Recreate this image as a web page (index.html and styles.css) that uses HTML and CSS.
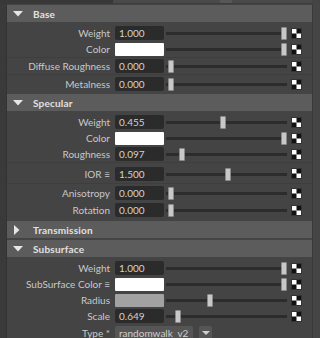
FILE: index.html
```html
<!DOCTYPE html>
<html lang="en">
<head>
    <meta charset="UTF-8">
    <title>Attribute Editor</title>
    <link rel="stylesheet" href="styles.css">
</head>
<body>
    <div class="topbar">
        <div class="topbar-dark"></div>
        <div class="topbar-field"><span class="topbar-knob"></span></div>
    </div>
    <div class="frame">
        <div class="gutter"></div>
        <div class="content">

            <div class="head">
                <svg class="arrow" width="10" height="6" viewBox="0 0 10 6"><polygon points="0,0 10,0 5,5.5" fill="#e6e6e6"/></svg>
                <span>Base</span>
            </div>
            <div class="row mt4">
                <span class="label">Weight</span>
                <span class="field">1.000</span>
                <div class="slider"><span class="handle" style="left:115px"></span></div>
                <svg class="map" viewBox="0 0 11 11"><rect x="0.5" y="0.5" width="10" height="10" fill="#fff" stroke="#333"/><rect x="5.5" y="1" width="4.5" height="4.5" fill="#111"/><rect x="1" y="5.5" width="4.5" height="4.5" fill="#111"/></svg>
            </div>
            <div class="row">
                <span class="label">Color</span>
                <span class="swatch white"></span>
                <div class="slider"><span class="handle" style="left:115px"></span></div>
                <svg class="map" viewBox="0 0 11 11"><rect x="0.5" y="0.5" width="10" height="10" fill="#fff" stroke="#333"/><rect x="5.5" y="1" width="4.5" height="4.5" fill="#111"/><rect x="1" y="5.5" width="4.5" height="4.5" fill="#111"/></svg>
            </div>
            <div class="sep"></div>
            <div class="row mt1">
                <span class="label">Diffuse Roughness</span>
                <span class="field">0.000</span>
                <div class="slider"><span class="handle" style="left:2px"></span></div>
                <svg class="map" viewBox="0 0 11 11"><rect x="0.5" y="0.5" width="10" height="10" fill="#fff" stroke="#333"/><rect x="5.5" y="1" width="4.5" height="4.5" fill="#111"/><rect x="1" y="5.5" width="4.5" height="4.5" fill="#111"/></svg>
            </div>
            <div class="sep"></div>
            <div class="row">
                <span class="label">Metalness</span>
                <span class="field">0.000</span>
                <div class="slider"><span class="handle" style="left:2px"></span></div>
                <svg class="map" viewBox="0 0 11 11"><rect x="0.5" y="0.5" width="10" height="10" fill="#fff" stroke="#333"/><rect x="5.5" y="1" width="4.5" height="4.5" fill="#111"/><rect x="1" y="5.5" width="4.5" height="4.5" fill="#111"/></svg>
            </div>

            <div class="head mt3">
                <svg class="arrow" width="10" height="6" viewBox="0 0 10 6"><polygon points="0,0 10,0 5,5.5" fill="#e6e6e6"/></svg>
                <span>Specular</span>
            </div>
            <div class="row mt4">
                <span class="label">Weight</span>
                <span class="field">0.455</span>
                <div class="slider"><span class="handle" style="left:54px"></span></div>
                <svg class="map" viewBox="0 0 11 11"><rect x="0.5" y="0.5" width="10" height="10" fill="#fff" stroke="#333"/><rect x="5.5" y="1" width="4.5" height="4.5" fill="#111"/><rect x="1" y="5.5" width="4.5" height="4.5" fill="#111"/></svg>
            </div>
            <div class="row">
                <span class="label">Color</span>
                <span class="swatch white"></span>
                <div class="slider"><span class="handle" style="left:115px"></span></div>
                <svg class="map" viewBox="0 0 11 11"><rect x="0.5" y="0.5" width="10" height="10" fill="#fff" stroke="#333"/><rect x="5.5" y="1" width="4.5" height="4.5" fill="#111"/><rect x="1" y="5.5" width="4.5" height="4.5" fill="#111"/></svg>
            </div>
            <div class="row">
                <span class="label">Roughness</span>
                <span class="field">0.097</span>
                <div class="slider"><span class="handle" style="left:13px"></span></div>
                <svg class="map" viewBox="0 0 11 11"><rect x="0.5" y="0.5" width="10" height="10" fill="#fff" stroke="#333"/><rect x="5.5" y="1" width="4.5" height="4.5" fill="#111"/><rect x="1" y="5.5" width="4.5" height="4.5" fill="#111"/></svg>
            </div>
            <div class="sep"></div>
            <div class="row tall">
                <span class="label">IOR ≡</span>
                <span class="field">1.500</span>
                <div class="slider"><span class="handle" style="left:59px"></span></div>
                <svg class="map" viewBox="0 0 11 11"><rect x="0.5" y="0.5" width="10" height="10" fill="#fff" stroke="#333"/><rect x="5.5" y="1" width="4.5" height="4.5" fill="#111"/><rect x="1" y="5.5" width="4.5" height="4.5" fill="#111"/></svg>
            </div>
            <div class="sep mt2"></div>
            <div class="row">
                <span class="label">Anisotropy</span>
                <span class="field">0.000</span>
                <div class="slider"><span class="handle" style="left:2px"></span></div>
                <svg class="map" viewBox="0 0 11 11"><rect x="0.5" y="0.5" width="10" height="10" fill="#fff" stroke="#333"/><rect x="5.5" y="1" width="4.5" height="4.5" fill="#111"/><rect x="1" y="5.5" width="4.5" height="4.5" fill="#111"/></svg>
            </div>
            <div class="row mt3">
                <span class="label">Rotation</span>
                <span class="field">0.000</span>
                <div class="slider"><span class="handle" style="left:2px"></span></div>
                <svg class="map" viewBox="0 0 11 11"><rect x="0.5" y="0.5" width="10" height="10" fill="#fff" stroke="#333"/><rect x="5.5" y="1" width="4.5" height="4.5" fill="#111"/><rect x="1" y="5.5" width="4.5" height="4.5" fill="#111"/></svg>
            </div>

            <div class="head mt4">
                <svg class="arrow side" width="10" height="10" viewBox="0 0 10 10"><polygon points="2,0 7.5,5 2,10" fill="#e6e6e6"/></svg>
                <span>Transmission</span>
            </div>
            <div class="head mt2">
                <svg class="arrow" width="10" height="6" viewBox="0 0 10 6"><polygon points="0,0 10,0 5,5.5" fill="#e6e6e6"/></svg>
                <span>Subsurface</span>
            </div>
            <div class="row mt4">
                <span class="label">Weight</span>
                <span class="field">1.000</span>
                <div class="slider"><span class="handle" style="left:115px"></span></div>
                <svg class="map" viewBox="0 0 11 11"><rect x="0.5" y="0.5" width="10" height="10" fill="#fff" stroke="#333"/><rect x="5.5" y="1" width="4.5" height="4.5" fill="#111"/><rect x="1" y="5.5" width="4.5" height="4.5" fill="#111"/></svg>
            </div>
            <div class="row">
                <span class="label">SubSurface Color ≡</span>
                <span class="swatch white"></span>
                <div class="slider"><span class="handle" style="left:115px"></span></div>
                <svg class="map" viewBox="0 0 11 11"><rect x="0.5" y="0.5" width="10" height="10" fill="#fff" stroke="#333"/><rect x="5.5" y="1" width="4.5" height="4.5" fill="#111"/><rect x="1" y="5.5" width="4.5" height="4.5" fill="#111"/></svg>
            </div>
            <div class="row">
                <span class="label">Radius</span>
                <span class="swatch grey"></span>
                <div class="slider"><span class="handle" style="left:41px"></span></div>
                <svg class="map" viewBox="0 0 11 11"><rect x="0.5" y="0.5" width="10" height="10" fill="#fff" stroke="#333"/><rect x="5.5" y="1" width="4.5" height="4.5" fill="#111"/><rect x="1" y="5.5" width="4.5" height="4.5" fill="#111"/></svg>
            </div>
            <div class="row">
                <span class="label">Scale</span>
                <span class="field">0.649</span>
                <div class="slider"><span class="handle" style="left:9px"></span></div>
                <svg class="map" viewBox="0 0 11 11"><rect x="0.5" y="0.5" width="10" height="10" fill="#fff" stroke="#333"/><rect x="5.5" y="1" width="4.5" height="4.5" fill="#111"/><rect x="1" y="5.5" width="4.5" height="4.5" fill="#111"/></svg>
            </div>
            <div class="row mt3">
                <span class="label">Type *</span>
                <span class="dropdown">randomwalk_v2</span>
                <span class="drop-btn">
                    <svg width="8" height="5" viewBox="0 0 8 5"><polygon points="0,0 8,0 4,4" fill="#cfcfcf"/></svg>
                </span>
            </div>

        </div>
        <div class="rail"></div>
    </div>
</body>
</html>
```

FILE: styles.css
```css
body {
    margin: 0;
    background: #444444;
    font-family: Lato, "Liberation Sans", sans-serif;
    font-size: 10px;
    color: #c8c8c8;
    overflow: hidden;
}

/* strip left over from the panel above */
.topbar {
    display: flex;
    height: 4px;
}
.topbar-dark {
    width: 113px;
    background: #383838;
}
.topbar-field {
    width: 199px;
    background: #4a4a4a;
    border-bottom: 1px solid #3c3c3c;
    box-sizing: border-box;
}
.topbar-knob {
    display: block;
    margin-left: 107px;
    width: 12px;
    height: 3px;
    background: #575757;
}

.frame {
    display: flex;
    height: 334px;
}
.gutter {
    width: 6px;
    background: #3a3a3a;
    border-right: 1px solid #333333;
}
.content {
    width: 305px;
    padding-top: 1px;
}
.rail {
    flex: 1;
    background: #454545;
    border-left: 1px solid #393939;
}

/* frame headers */
.head {
    display: flex;
    align-items: center;
    height: 17px;
    background: #5c5c5c;
    color: #e2e2e2;
    font-weight: bold;
    font-size: 10px;
    letter-spacing: 0.2px;
}
.arrow {
    margin-left: 6px;
    margin-right: 10px;
}
.arrow.side {
    margin-left: 5px;
    margin-right: 11px;
}

/* attribute rows */
.row {
    display: flex;
    align-items: center;
    height: 14px;
    margin-top: 2px;
}
.row.tall {
    height: 15px;
    margin-top: 3px;
}
.label {
    width: 103px;
    text-align: right;
    white-space: nowrap;
}
.field {
    margin-left: 5px;
    width: 45px;
    height: 14px;
    line-height: 14px;
    padding-left: 4px;
    background: #2b2b2b;
    border-radius: 2px;
    color: #d2d2d2;
}
.swatch {
    margin-left: 5px;
    width: 49px;
    height: 13px;
    border-radius: 1px;
}
.swatch.white {
    background: #ffffff;
}
.swatch.grey {
    background: #a2a2a2;
}
.slider {
    position: relative;
    margin-left: 2px;
    width: 121px;
    height: 14px;
}
.slider::before {
    content: "";
    position: absolute;
    left: 0;
    right: 0;
    top: 6px;
    height: 3px;
    background: #2c2c2c;
}
.handle {
    position: absolute;
    top: 1px;
    width: 4px;
    height: 11px;
    background: #c8c8c8;
    border: 1px solid #8a8a8a;
    border-radius: 1px;
    box-sizing: content-box;
}
.map {
    margin-left: 4px;
    width: 11px;
    height: 11px;
}

.dropdown {
    margin-left: 5px;
    width: 74px;
    height: 14px;
    line-height: 14px;
    padding-left: 4px;
    background: #555555;
    border-radius: 2px;
    color: #d0d0d0;
}
.drop-btn {
    display: flex;
    align-items: center;
    justify-content: center;
    margin-left: 6px;
    width: 13px;
    height: 14px;
    background: #555555;
    border-radius: 2px;
}

.sep {
    height: 1px;
    margin-top: 1px;
    background: #3e3e3e;
}

.mt1 { margin-top: 1px; }
.mt2 { margin-top: 2px; }
.mt3 { margin-top: 3px; }
.mt4 { margin-top: 4px; }
```
